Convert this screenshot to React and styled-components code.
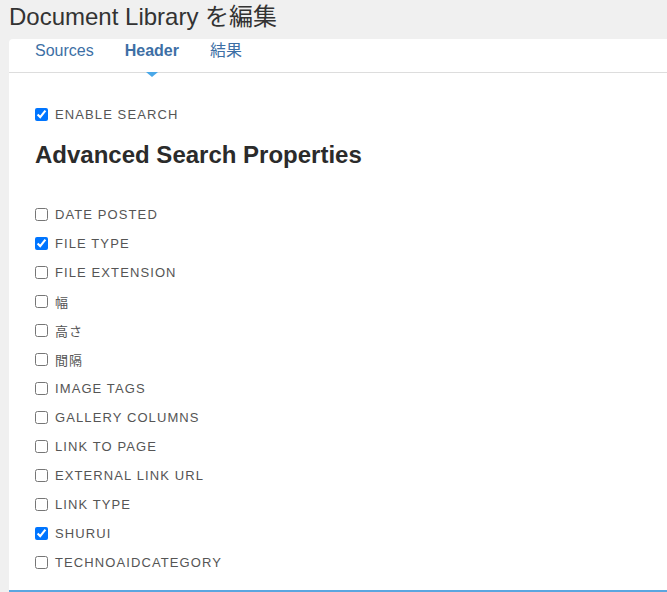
import React from 'react';
import styled, { createGlobalStyle } from 'styled-components';

const GlobalStyle = createGlobalStyle`
  html, body {
    margin: 0;
    padding: 0;
    background: #f0f0f0;
    font-family: "Liberation Sans", Arial, "Noto Sans CJK JP", sans-serif;
  }
`;

const Page = styled.div`
  width: 667px;
  height: 592px;
  overflow: hidden;
  display: flex;
  flex-direction: column;
`;

const Title = styled.h1`
  margin: 0;
  height: 39px;
  padding: 3px 0 0 9px;
  box-sizing: border-box;
  font-size: 24px;
  font-weight: normal;
  color: #333;
  line-height: 27px;
`;

const Panel = styled.div`
  flex: 1;
  margin-left: 9px;
  background: #fff;
  border-radius: 4px 0 0 0;
  border-bottom: 2px solid #5aa6e0;
  display: flex;
  flex-direction: column;
`;

const Tabs = styled.div`
  display: flex;
  height: 33px;
  border-bottom: 1px solid #ddd;
  padding-left: 26px;
  gap: 31px;
`;

const Tab = styled.div`
  position: relative;
  font-size: 16px;
  line-height: 23px;
  color: #3d6fa5;
  font-weight: ${p => (p.$active ? 'bold' : 'normal')};

  &::after {
    content: '';
    display: ${p => (p.$active ? 'block' : 'none')};
    position: absolute;
    left: 50%;
    bottom: -5px;
    transform: translateX(-50%);
    border-left: 6px solid transparent;
    border-right: 6px solid transparent;
    border-top: 5px solid #4aa8e8;
  }
`;

const Body = styled.div`
  padding: 27px 26px 0;
  display: flex;
  flex-direction: column;
`;

const Row = styled.label`
  display: flex;
  align-items: center;
  height: 29px;
  gap: 7px;
`;

const Check = styled.input.attrs({ type: 'checkbox' })`
  margin: 0;
  width: 13px;
  height: 13px;
`;

const Label = styled.span`
  font-size: 13px;
  letter-spacing: 1.1px;
  color: #555;
  text-transform: uppercase;
`;

const Heading = styled.h2`
  margin: 11px 0 31px;
  font-size: 24px;
  font-weight: bold;
  color: #2b2b2b;
  line-height: 29px;
`;

const props = [
  ['Date Posted', false],
  ['File Type', true],
  ['File Extension', false],
  ['幅', false],
  ['高さ', false],
  ['間隔', false],
  ['Image Tags', false],
  ['Gallery Columns', false],
  ['Link To Page', false],
  ['External Link URL', false],
  ['Link Type', false],
  ['Shurui', true],
  ['TechnoAidCategory', false],
];

export default function App() {
  return (
    <Page>
      <GlobalStyle />
      <Title>Document Library を編集</Title>
      <Panel>
        <Tabs>
          <Tab>Sources</Tab>
          <Tab $active>Header</Tab>
          <Tab>結果</Tab>
        </Tabs>
        <Body>
          <Row>
            <Check defaultChecked />
            <Label>Enable Search</Label>
          </Row>
          <Heading>Advanced Search Properties</Heading>
          {props.map(([name, on]) => (
            <Row key={name}>
              <Check defaultChecked={on} />
              <Label>{name}</Label>
            </Row>
          ))}
        </Body>
      </Panel>
    </Page>
  );
}
